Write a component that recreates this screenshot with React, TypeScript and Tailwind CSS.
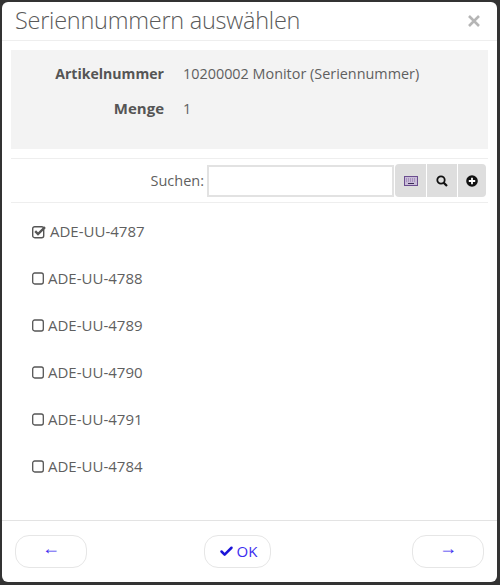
import { Check } from "lucide-react";

const items = ["ADE-UU-4787", "ADE-UU-4788", "ADE-UU-4789", "ADE-UU-4790", "ADE-UU-4791", "ADE-UU-4784"];

function CheckedBox() {
  return (
    <svg width="15" height="14" viewBox="0 0 15 14" className="block">
      <rect x="0.7" y="1.7" width="11" height="11" rx="2" fill="none" stroke="#555" strokeWidth="1.4" />
      <path d="M3.2 6.2 L6 9 L13 2.2" fill="none" stroke="#555" strokeWidth="2.4" />
    </svg>
  );
}

function EmptyBox() {
  return (
    <svg width="12" height="13" viewBox="0 0 12 13" className="block">
      <rect x="0.7" y="1" width="10.6" height="11" rx="2" fill="none" stroke="#555" strokeWidth="1.3" />
    </svg>
  );
}

export default function App() {
  return (
    <div className="h-[585px] w-[500px] bg-[#333333] pt-[2px] pl-[2px] pr-[3px] pb-[3px] font-['Open_Sans',sans-serif] text-[#5f5f5f]">
      <div className="flex h-full flex-col rounded-[6px] bg-white">
        <div className="flex h-[39px] items-center justify-between border-b border-[#eeeeee] pl-[13px] pr-[16px]">
          <span className="text-[23.5px] font-light leading-none tracking-[-0.25px] text-[#5a5a5a]">Seriennummern auswählen</span>
          <svg width="14" height="14" viewBox="0 0 14 14">
            <path d="M2 2 L12 12 M12 2 L2 12" stroke="#b5b5b5" strokeWidth="2.6" />
          </svg>
        </div>

        <div className="mx-[9px] mt-[9px] h-[99px] bg-[#f3f3f3] pt-[14px] text-[14.4px] leading-[19px]">
          <div className="flex">
            <div className="w-[153px] text-right text-[14.1px] font-bold text-[#555555]">Artikelnummer</div>
            <div className="ml-[19px]">10200002 Monitor (Seriennummer)</div>
          </div>
          <div className="mt-[16px] flex">
            <div className="w-[153px] text-right text-[15px] font-bold text-[#555555]">Menge</div>
            <div className="ml-[19px]">1</div>
          </div>
        </div>

        <div className="mx-[9px] mt-[9px] flex h-[45px] items-center justify-end border-y border-[#eeeeee] pr-[2px]">
          <span className="mr-[3px] text-[14.5px]">Suchen:</span>
          <div className="h-[32px] w-[187px] border-2 border-[#e2e2e2] bg-white" />
          <div className="ml-[1px] flex h-[33px] overflow-hidden rounded-[4px]">
            <div className="flex w-[31px] items-center justify-center bg-[#dedede]">
              <svg width="14" height="10" viewBox="0 0 14 10">
                <rect x="0.5" y="0.5" width="13" height="9" fill="#c9bdd8" stroke="#6b4d8f" />
                <path d="M2 3 H12 M2 5 H12" stroke="#8a6aa8" strokeDasharray="1 1" />
                <path d="M4 7.5 H10" stroke="#3a2a55" />
              </svg>
            </div>
            <div className="ml-[1px] flex w-[30px] items-center justify-center bg-[#dedede]">
              <svg width="12" height="12" viewBox="0 0 12 12">
                <circle cx="5" cy="5" r="3.7" fill="none" stroke="#111" strokeWidth="1.8" />
                <path d="M7.6 7.6 L11 11" stroke="#111" strokeWidth="2.2" />
              </svg>
            </div>
            <div className="ml-[1px] flex w-[28px] items-center justify-center bg-[#dedede]">
              <svg width="12" height="12" viewBox="0 0 12 12">
                <circle cx="6" cy="6" r="5.8" fill="#111" />
                <path d="M6 2.8 V9.2 M2.8 6 H9.2" stroke="#fff" strokeWidth="1.8" />
              </svg>
            </div>
          </div>
        </div>

        <div className="flex flex-1 flex-col pl-[30px] pt-[5px] text-[15px]">
          {items.map((item, i) => (
            <div key={item} className="flex h-[47px] items-center">
              {i === 0 ? <CheckedBox /> : <EmptyBox />}
              <span className={i === 0 ? "ml-[3px]" : "ml-[4px]"}>{item}</span>
            </div>
          ))}
        </div>

        <div className="flex h-[62px] items-center border-t border-[#e3e3e3] pl-[13px] pr-[13px] pb-[1px] text-[15px] text-[#3b2df0]">
          <div className="flex h-[33px] w-[72px] items-center justify-center rounded-[14px] border border-[#e6e6e6] pb-[9px] text-[18px] leading-none">←</div>
          <div className="ml-[117px] flex h-[33px] w-[67px] items-center justify-center gap-[3px] rounded-[14px] border border-[#e6e6e6] pl-[1px]">
            <Check size={15} strokeWidth={4} className="text-[#1a14d8]" />
            <span>OK</span>
          </div>
          <div className="ml-auto flex h-[33px] w-[72px] items-center justify-center rounded-[14px] border border-[#e6e6e6] pb-[9px] text-[18px] leading-none">→</div>
        </div>
      </div>
    </div>
  );
}
